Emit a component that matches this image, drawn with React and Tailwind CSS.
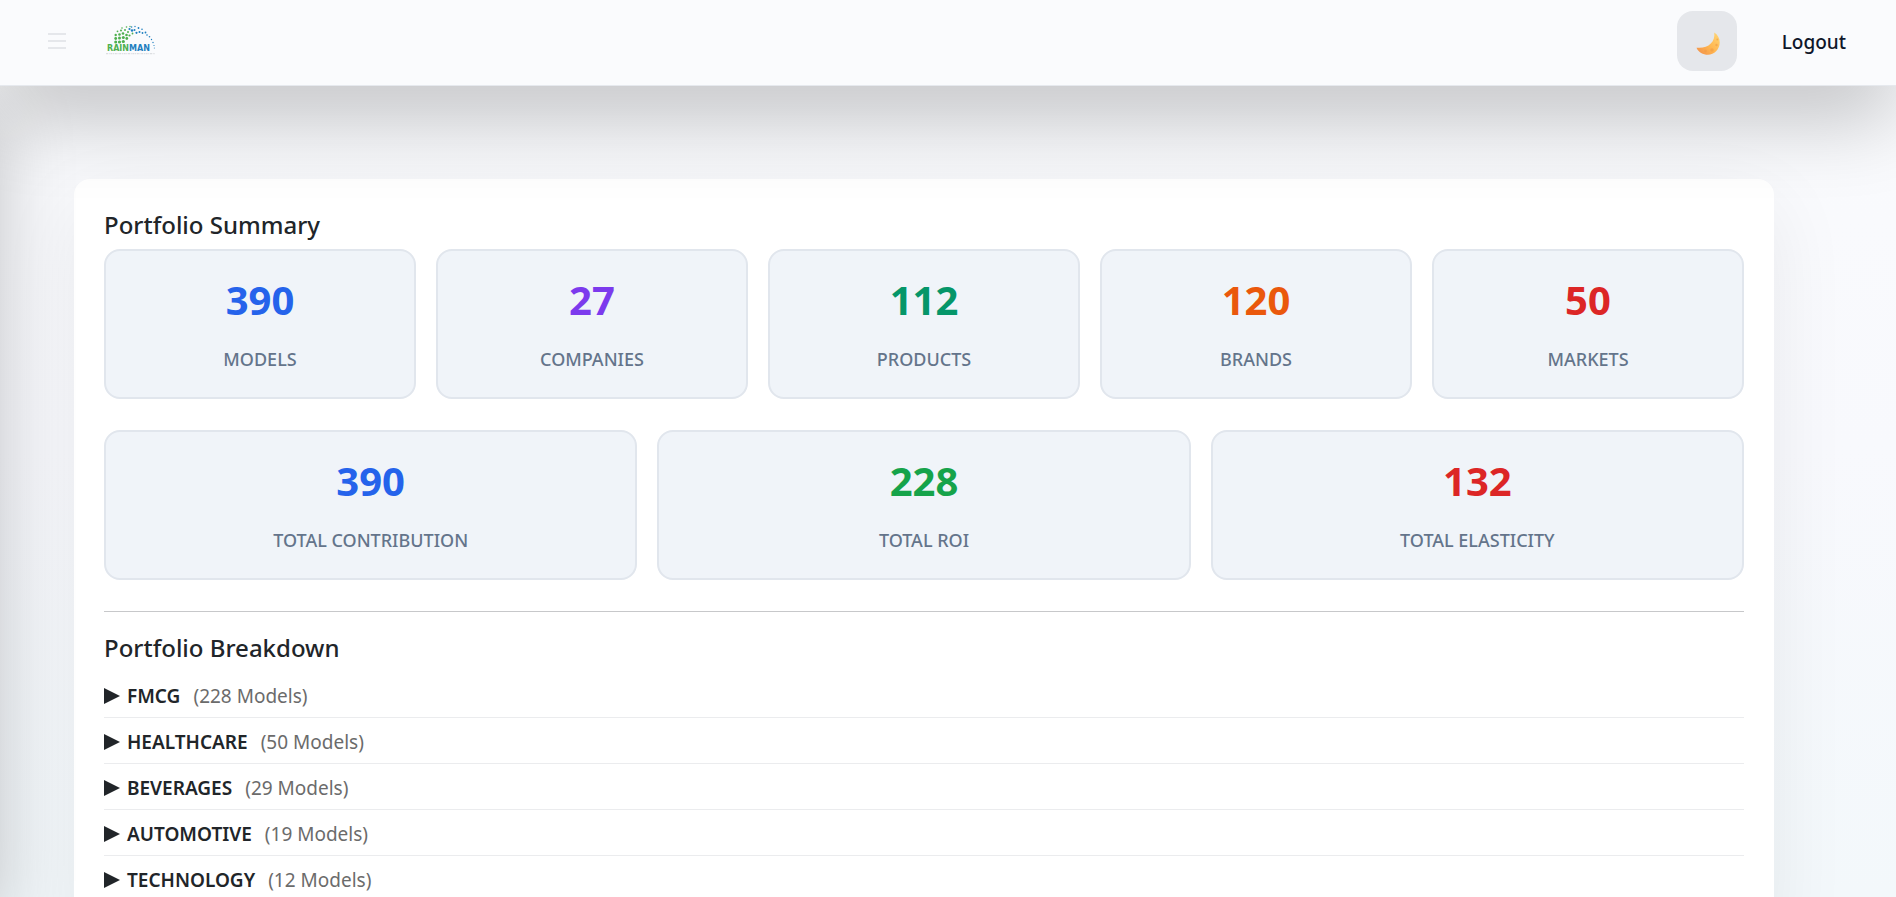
import React, { useState } from 'react';

const summaryTop = [
  { label: 'Models', value: 390, color: 'text-[#2563eb]' },
  { label: 'Companies', value: 27, color: 'text-[#7c3aed]' },
  { label: 'Products', value: 112, color: 'text-[#059669]' },
  { label: 'Brands', value: 120, color: 'text-[#ea580c]' },
  { label: 'Markets', value: 50, color: 'text-[#dc2626]' },
];

const summaryBottom = [
  { label: 'Total Contribution', value: 390, color: 'text-[#2563eb]' },
  { label: 'Total ROI', value: 228, color: 'text-[#16a34a]' },
  { label: 'Total Elasticity', value: 132, color: 'text-[#dc2626]' },
];

const industries = [
  { name: 'FMCG', models: 228 },
  { name: 'HEALTHCARE', models: 50 },
  { name: 'BEVERAGES', models: 29 },
  { name: 'AUTOMOTIVE', models: 19 },
  { name: 'TECHNOLOGY', models: 12 },
];

const App = () => {
  const [open, setOpen] = useState(null);

  return (
    <div className="relative h-screen overflow-hidden bg-linear-to-b from-[#fafbfd] via-[#f8f9fd] to-[#f3f8fb] font-['Noto_Sans','Segoe_UI',sans-serif] text-[#212529]">
      {/* Collapsed drawer, only its shadow reaches the page */}
      <div className="absolute top-20 bottom-0 right-full w-72 shadow-[0_25px_70px_0_rgba(0,0,0,0.22)]" />

      <header className="relative z-10 flex h-[86px] items-center justify-between border-b border-[#e6e9ee] bg-[#fafbfd] pb-1 pl-9 pr-[26px] shadow-[0_32px_80px_0_rgba(0,0,0,0.23)]">
        <div className="flex items-center gap-[30px]">
          <button aria-label="Toggle menu" className="flex size-10 items-center justify-start pl-3">
            <MenuIcon />
          </button>
          <Logo />
        </div>
        <div className="flex items-center gap-[21px]">
          <button aria-label="Toggle theme" className="flex size-15 items-center justify-center rounded-2xl bg-[#e5e7eb]">
            <MoonIcon />
          </button>
          <button className="px-6 pt-4 pb-3 text-[19px] font-medium text-[#0f172a]">Logout</button>
        </div>
      </header>

      <main className="pl-[74px] pr-[122px] pt-[93px]">
        <section className="rounded-2xl bg-white p-[30px] shadow-[0_24px_80px_rgba(0,0,0,0.07)]">
          <h2 className="mb-2 text-2xl font-medium leading-8">Portfolio Summary</h2>
          <div className="mb-[31px] grid grid-cols-5 gap-5">
            {summaryTop.map((s) => <StatCard key={s.label} {...s} />)}
          </div>
          <div className="grid grid-cols-3 gap-5">
            {summaryBottom.map((s) => <StatCard key={s.label} {...s} />)}
          </div>
          <hr className="mt-[31px] mb-5 border-[#c7c8ca]" />
          <h2 className="mb-2 text-2xl font-medium leading-8">Portfolio Breakdown</h2>
          <ul>
            {industries.map((item) => (
              <li key={item.name} className="border-b border-[#ebecee]">
                <button
                  onClick={() => setOpen(open === item.name ? null : item.name)}
                  aria-expanded={open === item.name}
                  className="flex h-[45px] w-full items-center pt-[3px] text-[19px]"
                >
                  <svg viewBox="0 0 16 16" className="mr-[7px] size-4 fill-[#212529]">
                    <path d="M0 0 16 8 0 16z" />
                  </svg>
                  <span className="font-semibold">{item.name}</span>
                  <span className="ml-[13px] text-[#6b6b6b]">({item.models} Models)</span>
                </button>
              </li>
            ))}
          </ul>
        </section>
      </main>
    </div>
  );
};

const StatCard = ({ label, value, color }) => (
  <div className="flex h-[150px] flex-col items-center rounded-2xl border-2 border-[#e1e6ed] bg-[#f0f4f9] pt-[19px]">
    <div className={`text-[40px] font-bold leading-[60px] ${color}`}>{value}</div>
    <div className="mt-[17px] text-[18px] font-medium uppercase leading-6 text-[#64748b]">{label}</div>
  </div>
);

const MenuIcon = () => (
  <svg width="18" height="18" viewBox="0 0 18 18" stroke="#e5e7eb" strokeWidth="2">
    <path d="M0 2h18M0 9h18M0 16h18" />
  </svg>
);

const MoonIcon = () => (
  <svg width="28" height="28" viewBox="0 0 28 28">
    <defs>
      <linearGradient id="moon" x1="0" y1="1" x2="1" y2="0">
        <stop offset="0" stopColor="#f08c4a" />
        <stop offset="0.45" stopColor="#ffb54f" />
        <stop offset="1" stopColor="#ffd877" />
      </linearGradient>
    </defs>
    <path d="M21.300 5.500C25 8 26.700 11.500 26.700 15.500C26.700 22.500 21 27.700 15 27.700C10 27.700 5.500 25.500 3.500 20.700C14.500 22 22.500 15.500 21.300 5.500z" fill="url(#moon)" />
    <g fill="#ef9a45" opacity="0.6">
      <circle cx="19" cy="23" r="1.700" />
      <circle cx="23.500" cy="18" r="1.200" />
      <circle cx="12.500" cy="24" r="1.300" />
      <circle cx="24.300" cy="12.500" r="0.900" />
    </g>
  </svg>
);

const greenDots = [
  [9.7, 17, 1.5], [9.7, 13.5, 1.4], [9.7, 10, 1.2], [13.5, 17, 1.6], [13.5, 13, 1.5], [13.5, 9.5, 1.3],
  [17.3, 16.5, 1.6], [17.3, 12.5, 1.5], [17, 8.5, 1.3], [20.8, 13.5, 1.4], [20.5, 10, 1.3], [23.5, 10.5, 1.1],
  [11.5, 6.3, 0.9], [15, 5.5, 1], [16, 3, 0.8], [19, 5, 1], [20.5, 2, 0.8], [24, 1.5, 0.7], [22, 7, 1], [26.5, 8.5, 0.9],
];

const blueDots = [
  [23.5, 4, 1.1], [26, 5.5, 1.2], [25.6, 2, 0.8], [29, 1.5, 0.7], [28.5, 5, 1], [30.5, 7.8, 1.1], [32.5, 3, 0.9],
  [33.5, 7, 1], [36, 4.3, 0.8], [36.5, 8, 0.9], [39.5, 7.5, 0.9], [41, 10, 0.8], [43.5, 11.8, 0.8],
  [45.5, 14.5, 0.7], [47, 17.5, 0.7], [48, 20.5, 0.6], [48.3, 23, 0.5],
];

const Logo = () => (
  <svg width="50" height="32" viewBox="0 0 50 32" role="img" aria-label="Rainman">
    {greenDots.map(([x, y, r]) => <circle key={`${x}-${y}`} cx={x} cy={y} r={r} fill="#4fb04f" />)}
    {blueDots.map(([x, y, r]) => <circle key={`${x}-${y}`} cx={x} cy={y} r={r} fill="#1f7fc0" />)}
    <text x="1" y="26" fontSize="8" fontWeight="700" fontFamily="DejaVu Sans">
      <tspan fill="#4fb04f">RAIN</tspan><tspan fill="#1f7fc0">MAN</tspan>
    </text>
    <path d="M0 28.700h49" stroke="#dcdee1" strokeWidth="1.300" strokeDasharray="2 0.700 1 0.700" />
  </svg>
);

export default App;
